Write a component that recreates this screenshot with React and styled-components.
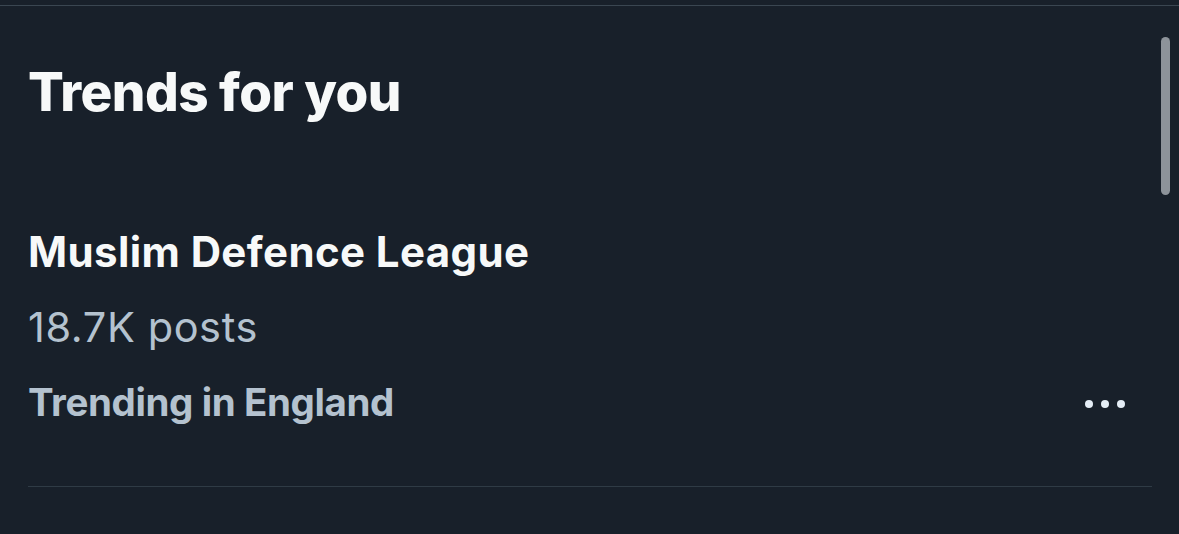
import React from "react";
import styled, { createGlobalStyle } from "styled-components";

const Global = createGlobalStyle`
  html, body { margin: 0; padding: 0; background: #18202a; }
  body { font-family: Inter, "Noto Sans", sans-serif; -webkit-font-smoothing: antialiased; }
`;

const Page = styled.div`
  position: relative;
  width: 1179px;
  height: 534px;
  overflow: hidden;
  background: #18202a;
  padding-top: 5px;
  box-sizing: border-box;
`;

const Panel = styled.section`
  border-top: 1px solid #3a4651;
  padding: 54px 27px 0 28px;
  display: flex;
  flex-direction: column;
`;

const Heading = styled.h2`
  margin: 0;
  font-size: 53px;
  line-height: 64px;
  font-weight: 800;
  color: #f7f9f9;
  letter-spacing: -0.55px;
`;

const Trend = styled.article`
  margin-top: 102px;
  display: flex;
  flex-direction: column;
  gap: 23px;
  padding-bottom: 58px;
  border-bottom: 1px solid #2f3b45;
`;

const Name = styled.div`
  font-size: 42px;
  line-height: 52px;
  font-weight: 700;
  color: #f7f9f9;
  letter-spacing: 0.4px;
`;

const Count = styled.div`
  font-size: 41.5px;
  line-height: 52px;
  font-weight: 400;
  color: #b4c2cf;
  letter-spacing: 0.6px;
`;

const MetaRow = styled.div`
  display: flex;
  align-items: center;
  justify-content: space-between;
`;

const Context = styled.div`
  font-size: 38.5px;
  line-height: 52px;
  font-weight: 700;
  color: #b4c2cf;
  letter-spacing: -0.4px;
`;

const More = styled.button`
  border: 0;
  background: transparent;
  padding: 0;
  margin: 4px 27px 0 0;
  display: flex;
  gap: 7.5px;
  cursor: pointer;
`;

const Dot = styled.span`
  width: 8.5px;
  height: 8.5px;
  border-radius: 50%;
  background: #e4edf5;
`;

const Scrollbar = styled.div`
  position: absolute;
  left: 1161px;
  top: 37px;
  width: 9px;
  height: 158px;
  border-radius: 5px;
  background: #8d939a;
`;

export default function App() {
  return (
    <Page>
      <Global />
      <Panel>
        <Heading>Trends for you</Heading>
        <Trend>
          <Name>Muslim Defence League</Name>
          <Count>18.7K posts</Count>
          <MetaRow>
            <Context>Trending in England</Context>
            <More aria-label="More">
              <Dot />
              <Dot />
              <Dot />
            </More>
          </MetaRow>
        </Trend>
      </Panel>
      <Scrollbar />
    </Page>
  );
}
